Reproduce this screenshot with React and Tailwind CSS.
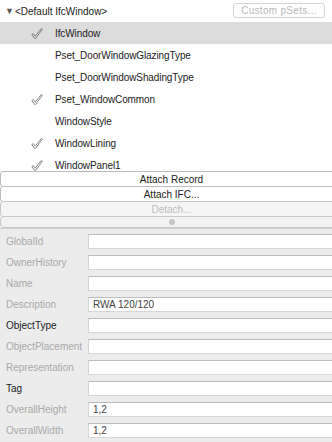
import React from "react";

const Check = () => (
  <svg width="12" height="11" viewBox="0 0 12 11" className="block">
    <path
      d="M0.8 6.6 L2.3 5.6 L4.2 8.2 L10.2 0.6 L11.4 1.2 L4.6 10.4 L3.6 10.4 Z"
      fill="none"
      stroke="#6b6b6b"
      strokeWidth="0.8"
      strokeLinejoin="round"
    />
  </svg>
);

const items = [
  { name: "IfcWindow", checked: true, selected: true },
  { name: "Pset_DoorWindowGlazingType", checked: false },
  { name: "Pset_DoorWindowShadingType", checked: false },
  { name: "Pset_WindowCommon", checked: true },
  { name: "WindowStyle", checked: false },
  { name: "WindowLining", checked: true },
  { name: "WindowPanel1", checked: true },
];

const fields = [
  { label: "GlobalId", active: false, value: "" },
  { label: "OwnerHistory", active: false, value: "" },
  { label: "Name", active: false, value: "" },
  { label: "Description", active: false, value: "RWA 120/120" },
  { label: "ObjectType", active: true, value: "" },
  { label: "ObjectPlacement", active: false, value: "" },
  { label: "Representation", active: false, value: "" },
  { label: "Tag", active: true, value: "" },
  { label: "OverallHeight", active: false, value: "1,2" },
  { label: "OverallWidth", active: false, value: "1,2" },
];

export default function App() {
  return (
    <div
      className="w-[332px] h-[442px] overflow-hidden bg-white text-[10px] text-[#222]"
      style={{ fontFamily: '"Liberation Sans", Arial, sans-serif' }}
    >
      {/* Header */}
      <div className="h-[22px] flex items-center justify-between pl-[5px] pr-[7px]">
        <div className="flex items-center">
          <span className="text-[9px] text-[#555] mr-[1px] leading-none">▼</span>
          <span className="text-[10px] text-[#222]">&lt;Default IfcWindow&gt;</span>
        </div>
        <div className="w-[92px] h-[15px] mt-[-1px] rounded-[3px] border border-[#d4d4d4] flex items-center justify-center text-[10px] text-[#b8b8b8] tracking-[0.3px]">
          Custom pSets...
        </div>
      </div>

      {/* List */}
      <div className="h-[149px] overflow-hidden">
        {items.map((it) => (
          <div
            key={it.name}
            className={
              "h-[22px] flex items-center " + (it.selected ? "bg-[#dcdcdc]" : "")
            }
          >
            <div className="w-[55px] shrink-0 flex justify-end pr-[12px]">
              {it.checked ? <Check /> : null}
            </div>
            <span className="text-[10px] text-[#222] tracking-[-0.1px]">{it.name}</span>
          </div>
        ))}
      </div>

      {/* Buttons */}
      <div className="w-[343px]">
        <div className="h-[16px] rounded-[3px] border border-[#bcbcbc] bg-white flex items-center justify-center text-[10px] text-[#222]">
          Attach Record
        </div>
        <div className="h-[16px] -mt-px rounded-[3px] border border-[#bcbcbc] bg-white flex items-center justify-center text-[10px] text-[#222]">
          Attach IFC...
        </div>
        <div className="h-[16px] -mt-px rounded-[3px] border border-[#c8c8c8] bg-[#f5f5f5] flex items-center justify-center text-[10px] text-[#bdbdbd]">
          Detach...
        </div>
        <div className="h-[12px] -mt-px rounded-[3px] border border-[#c8c8c8] bg-[#f2f2f2] flex items-center justify-center">
          <div className="w-[6px] h-[6px] rounded-full bg-[#c4c4c4]" />
        </div>
      </div>

      {/* Form */}
      <div className="bg-[#ececec] border-t border-[#cfcfcf] h-[220px] pt-[5px] flex flex-col gap-[6px]">
        {fields.map((f) => (
          <div key={f.label} className="h-[15px] flex items-center">
            <span
              className={
                "w-[88px] shrink-0 pl-[6px] text-[10px] whitespace-nowrap " +
                (f.active ? "text-[#222]" : "text-[#a9a9a9]")
              }
            >
              {f.label}
            </span>
            <div className="h-[15px] w-[260px] shrink-0 bg-white border border-[#d6d6d6] border-t-[#bcbcbc] flex items-center pl-[4px] text-[10px] text-[#444]">
              {f.value}
            </div>
          </div>
        ))}
      </div>
    </div>
  );
}
